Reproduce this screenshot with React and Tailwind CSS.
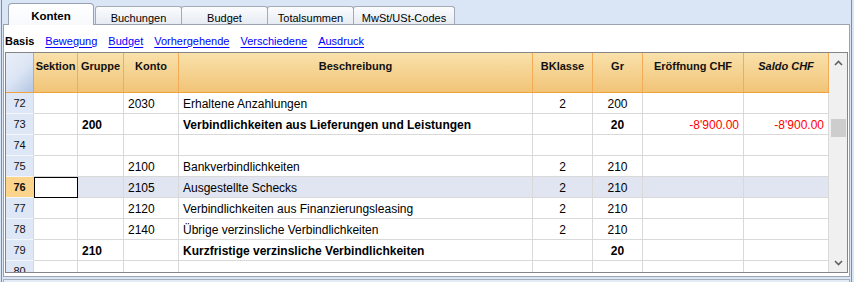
import React from 'react'

// Column layout of the account table (widths include the right grid line)
const columns = [
  { key: 'sektion', label: 'Sektion', w: 'w-[44px]', align: 'justify-start' },
  { key: 'gruppe', label: 'Gruppe', w: 'w-[46px]', align: 'justify-start' },
  { key: 'konto', label: 'Konto', w: 'w-[55px]', align: 'justify-start' },
  { key: 'beschreibung', label: 'Beschreibung', w: 'w-[354px]', align: 'justify-start' },
  { key: 'bklasse', label: 'BKlasse', w: 'w-[60px]', align: 'justify-center' },
  { key: 'gr', label: 'Gr', w: 'w-[50px]', align: 'justify-center' },
  { key: 'eroeffnung', label: 'Eröffnung CHF', w: 'w-[101px]', align: 'justify-end' },
  { key: 'saldo', label: 'Saldo CHF', w: 'w-[85px]', align: 'justify-end', italic: true },
]

const rows = [
  { nr: 72, konto: '2030', beschreibung: 'Erhaltene Anzahlungen', bklasse: '2', gr: '200' },
  {
    nr: 73,
    bold: true,
    gruppe: '200',
    beschreibung: 'Verbindlichkeiten aus Lieferungen und Leistungen',
    gr: '20',
    eroeffnung: "-8'900.00",
    saldo: "-8'900.00",
  },
  { nr: 74 },
  { nr: 75, konto: '2100', beschreibung: 'Bankverbindlichkeiten', bklasse: '2', gr: '210' },
  { nr: 76, selected: true, konto: '2105', beschreibung: 'Ausgestellte Schecks', bklasse: '2', gr: '210' },
  { nr: 77, konto: '2120', beschreibung: 'Verbindlichkeiten aus Finanzierungsleasing', bklasse: '2', gr: '210' },
  { nr: 78, konto: '2140', beschreibung: 'Übrige verzinsliche Verbindlichkeiten', bklasse: '2', gr: '210' },
  { nr: 79, bold: true, gruppe: '210', beschreibung: 'Kurzfristige verzinsliche Verbindlichkeiten', gr: '20' },
  { nr: 80 },
]

const tabs = [
  { label: 'Buchungen', w: 'w-[87px]' },
  { label: 'Budget', w: 'w-[87px]' },
  { label: 'Totalsummen', w: 'w-[87px]' },
  { label: 'MwSt/USt-Codes', w: 'w-[102px]' },
]

const links = ['Bewegung', 'Budget', 'Vorhergehende', 'Verschiedene', 'Ausdruck']

const Chevron = ({ up }) => (
  <svg width="9" height="6" viewBox="0 0 9 6" className="text-[#606060]">
    <path
      d={up ? 'M1 5 L4.5 1.5 L8 5' : 'M1 1 L4.5 4.5 L8 1'}
      fill="none"
      stroke="currentColor"
      strokeWidth="1.6"
    />
  </svg>
)

const TabBar = () => (
  <div className="h-[24px] flex items-end pl-[6px] shrink-0">
    <div className="relative z-10 w-[86px] h-[22px] -mb-px mr-px border border-b-0 border-[#98a2b0] rounded-t-[4px] bg-[linear-gradient(to_bottom,#ffffff,#f7f9fc)] flex justify-center pt-[4px] text-[11.5px] font-bold text-black">
      Konten
    </div>
    {tabs.map((tab, i) => (
      <div
        key={tab.label}
        className={`${tab.w} ${i > 0 ? '-ml-px' : ''} h-[18px] border border-b-0 border-[#a3abb7] rounded-t-[3px] bg-[linear-gradient(to_bottom,#fbfcfe,#e6ebf3)] flex justify-center pt-[3px] text-[11px] text-black`}
      >
        {tab.label}
      </div>
    ))}
  </div>
)

const HeaderRow = () => (
  <div className="h-[40px] flex shrink-0 border-b border-[#f2a23c]">
    <div className="w-[28px] h-full shrink-0 border-r border-[#f2a23c] bg-[linear-gradient(135deg,#e9eff9_0%,#dde6f5_50%,#b3c6e2_100%)]" />
    {columns.map((col) => (
      <div
        key={col.key}
        className={`${col.w} h-full shrink-0 border-r border-[#f3ac55] bg-[linear-gradient(to_bottom,#f9e1ab,#f1c477)] flex justify-center pt-[5px] text-[11px] font-bold text-[#111] ${col.italic ? 'italic' : ''}`}
      >
        {col.label}
      </div>
    ))}
  </div>
)

const DataRow = ({ row }) => {
  const rowBg = row.selected ? 'bg-[#e1e4f1]' : 'bg-white'
  return (
    <div className="h-[21px] flex shrink-0">
      <div
        className={`w-[28px] h-full shrink-0 border-r border-b border-r-[#cfd8e6] border-b-[#f3f6fb] flex items-center justify-center pt-px text-[11px] text-[#111] ${
          row.selected ? 'bg-[#fcd48c] font-bold' : 'bg-[#dee7f5]'
        }`}
      >
        {row.nr}
      </div>
      {columns.map((col) => {
        const value = row[col.key]
        const red = col.key === 'eroeffnung' || col.key === 'saldo'
        const cursor = row.selected && col.key === 'sektion'
        return (
          <div
            key={col.key}
            className={`${col.w} h-full shrink-0 flex items-center ${col.align} px-[4px] pt-px text-[12px] whitespace-nowrap ${
              cursor ? 'border border-black bg-white' : `border-r border-b border-[#d9d9d9] ${rowBg}`
            } ${row.bold ? 'font-bold' : ''} ${red ? 'text-[#ff0000] font-normal' : 'text-black'}`}
          >
            {value}
          </div>
        )
      })}
    </div>
  )
}

const Scrollbar = () => (
  <div className="w-[18px] h-full shrink-0 bg-[#f0f0f0] flex flex-col items-center">
    <div className="h-[20px] flex items-center justify-center">
      <Chevron up />
    </div>
    <div className="mt-[46px] w-[15px] h-[18px] bg-[#cdcdcd]" />
    <div className="flex-1" />
    <div className="h-[18px] flex items-center justify-center">
      <Chevron />
    </div>
  </div>
)

export default function App() {
  return (
    <div className="w-[854px] h-[282px] bg-[#dae5f6] pl-px overflow-hidden font-['Liberation_Sans',Arial,sans-serif]">
      <div className="w-[851px] h-full border-x border-[#6a90cd] flex flex-col">
        <TabBar />

        <div className="mx-px h-[253px] shrink-0 bg-white border border-[#9aa3ae] flex flex-col">
          {/* view links */}
          <div className="h-[27px] shrink-0 flex items-center gap-[11px] pl-px pt-[5px] text-[11px]">
            <span className="font-bold text-black">Basis</span>
            {links.map((l) => (
              <span key={l} className="text-[#0000ff] underline underline-offset-2">
                {l}
              </span>
            ))}
          </div>

          {/* account grid */}
          <div className="ml-px w-[843px] h-[221px] shrink-0 border border-[#858585] flex overflow-hidden">
            <div className="w-[823px] h-full flex flex-col overflow-hidden">
              <HeaderRow />
              {rows.map((row) => (
                <DataRow key={row.nr} row={row} />
              ))}
            </div>
            <Scrollbar />
          </div>
        </div>

        <div className="mt-[2px] mx-px flex-1 border-x border-t border-[#a7afba] bg-[#e3ebf7]" />
      </div>
    </div>
  )
}
